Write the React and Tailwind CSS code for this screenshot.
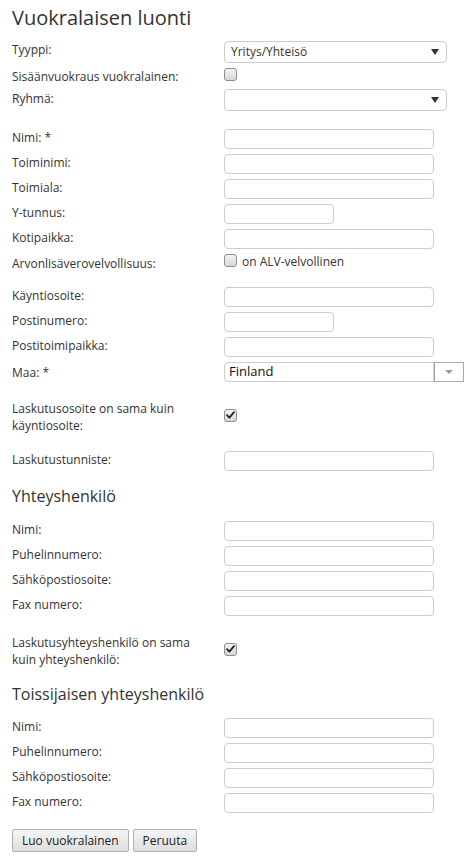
import React from "react";

const FONT = { fontFamily: '"Open Sans", "Noto Sans", sans-serif' };

function Check({ checked }) {
  return (
    <span className="inline-flex h-[13px] w-[13px] shrink-0 items-center justify-center rounded-[3px] border border-[#8e8e8e] bg-gradient-to-b from-[#f4f4f4] to-[#d6d6d6]">
      {checked && (
        <svg width="9" height="8" viewBox="0 0 9 8">
          <path d="M1 4.2 L3.4 6.6 L8 1.2" fill="none" stroke="#222" strokeWidth="1.8" strokeLinecap="round" strokeLinejoin="round" />
        </svg>
      )}
    </span>
  );
}

function Label({ children }) {
  return <div className="w-[212px] shrink-0 text-[12px] leading-[17px] text-[#333]">{children}</div>;
}

function InputRow({ label, short, last }) {
  return (
    <div className={`flex h-[20px] items-start ${last ? "" : "mb-[5px]"}`}>
      <Label>{label}</Label>
      <div className={`h-[20px] rounded-[4px] border border-[#cccccc] bg-white ${short ? "w-[110px]" : "w-[210px]"}`} />
    </div>
  );
}

function SelectBox({ value }) {
  return (
    <div className="flex h-[22px] w-[223px] items-center justify-between rounded-[4px] border border-[#cccccc] bg-white pl-[6px] pr-[6px] text-[12px] text-[#333]">
      <span>{value}</span>
      <svg width="8" height="6" viewBox="0 0 8 6" className="mr-[1px]">
        <path d="M0 0 L8 0 L4 6 Z" fill="#333" />
      </svg>
    </div>
  );
}

export default function App() {
  return (
    <div className="min-h-[864px] bg-white px-3 pt-[4px]" style={FONT}>
      <h1 className="mb-[9px] text-[20px] leading-[28px] font-normal text-[#333]">Vuokralaisen luonti</h1>

      <div className="mb-[5px] flex h-[22px] items-start">
        <Label>Tyyppi:</Label>
        <SelectBox value="Yritys/Yhteisö" />
      </div>
      <div className="mb-[5px] flex h-[16px] items-start">
        <div className="w-[212px] shrink-0 text-[12px] leading-[17px] text-[#333]">Sisäänvuokraus vuokralainen:</div>
        <Check />
      </div>
      <div className="mb-[18px] flex h-[22px] items-start">
        <div className="w-[212px] shrink-0 pt-[1px] text-[12px] leading-[17px] text-[#333]">Ryhmä:</div>
        <SelectBox value="" />
      </div>

      <InputRow label="Nimi: *" />
      <InputRow label="Toiminimi:" />
      <InputRow label="Toimiala:" />
      <InputRow label="Y-tunnus:" short />
      <InputRow label="Kotipaikka:" />
      <div className="mt-[1px] mb-[17px] flex h-[16px] items-start">
        <div className="w-[212px] shrink-0 pt-[1px] text-[12px] leading-[17px] text-[#333]">Arvonlisäverovelvollisuus:</div>
        <Check />
        <span className="ml-[5px] text-[12px] leading-[15px] text-[#333]">on ALV-velvollinen</span>
      </div>

      <InputRow label="Käyntiosoite:" />
      <InputRow label="Postinumero:" short />
      <InputRow label="Postitoimipaikka:" />
      <div className="mb-[18px] flex h-[20px] items-center">
        <Label>Maa: *</Label>
        <div className="flex h-[20px]">
          <div className="flex h-[20px] w-[210px] items-center rounded-l-[4px] border border-[#cccccc] bg-white pl-[4px] text-[13px] text-[#111]">Finland</div>
          <div className="flex h-[20px] w-[30px] items-center justify-center border border-[#a8a8a8] bg-white">
            <svg width="8" height="4" viewBox="0 0 8 4">
              <path d="M0 0 L8 0 L4 4 Z" fill="#999" />
            </svg>
          </div>
        </div>
      </div>

      <div className="mb-[17px] flex items-start">
        <div className="w-[212px] shrink-0 pr-[30px] text-[12px] leading-[17px] text-[#333]">Laskutusosoite on sama kuin käyntiosoite:</div>
        <div className="pt-[1px]"><Check checked /></div>
      </div>

      <InputRow label="Laskutustunniste:" last />

      <h2 className="mt-[15px] mb-[15px] text-[16px] leading-[20px] font-normal text-[#333]">Yhteyshenkilö</h2>
      <InputRow label="Nimi:" />
      <InputRow label="Puhelinnumero:" />
      <InputRow label="Sähköpostiosoite:" />
      <InputRow label="Fax numero:" last />

      <div className="mt-[18px] flex items-start">
        <div className="w-[212px] shrink-0 pr-[20px] text-[12px] leading-[17px] text-[#333]">Laskutusyhteyshenkilö on sama kuin yhteyshenkilö:</div>
        <div className="pt-[1px]"><Check checked /></div>
      </div>

      <h2 className="mt-[16px] mb-[14px] text-[16px] leading-[20px] font-normal text-[#333]">Toissijaisen yhteyshenkilö</h2>
      <InputRow label="Nimi:" />
      <InputRow label="Puhelinnumero:" />
      <InputRow label="Sähköpostiosoite:" />
      <InputRow label="Fax numero:" last />

      <div className="mt-[16px] flex gap-[4px]">
        <button className="h-[23px] rounded-[2px] border border-[#adadad] bg-gradient-to-b from-[#f5f5f5] to-[#dedede] px-[9px] text-[12px] leading-[20px] text-[#222]">Luo vuokralainen</button>
        <button className="h-[23px] rounded-[2px] border border-[#adadad] bg-gradient-to-b from-[#f5f5f5] to-[#dedede] px-[9px] text-[12px] leading-[20px] text-[#222]">Peruuta</button>
      </div>
    </div>
  );
}
